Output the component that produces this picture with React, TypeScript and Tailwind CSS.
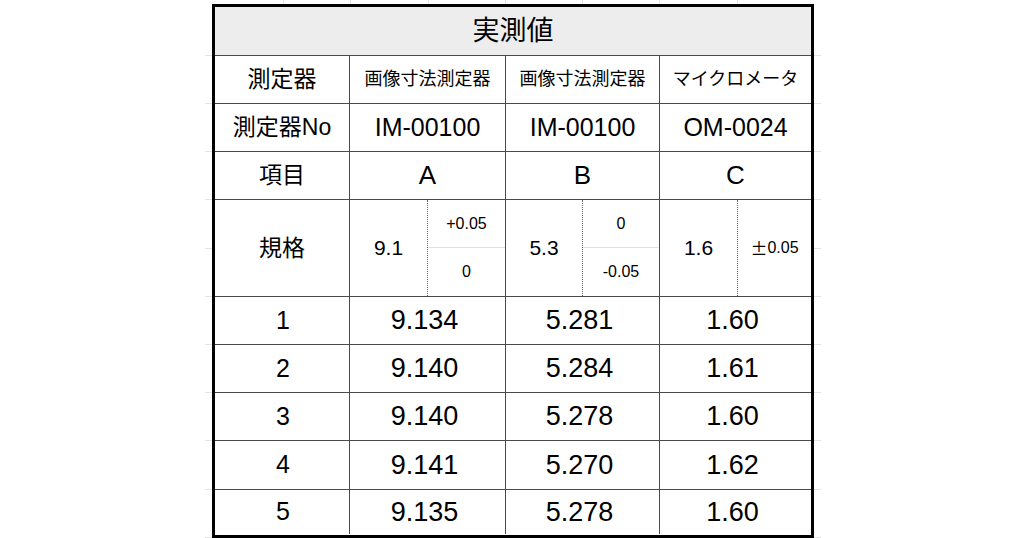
import React from "react";

const FONT = {
  fontFamily: '"Liberation Sans", Arial, "Noto Sans CJK JP", sans-serif',
};

const leftTicks = [
  "mt-[51px]",
  "mt-[47px]",
  "mt-[47px]",
  "mt-[47px]",
  "mt-[48px]",
  "mt-[47px]",
  "mt-[47px]",
  "mt-[47px]",
  "mt-[47px]",
  "mt-[48px]",
  "mt-[47px]",
];

function Ticks() {
  return (
    <div className="flex flex-col w-[7px] shrink-0">
      {leftTicks.map((c, i) => (
        <div key={i} className={`h-px w-full bg-[#e3e3e3] ${c}`} />
      ))}
    </div>
  );
}

const line = "border-[#4a4a4a]";

function Row({
  label,
  cells,
  h,
  labelCls = "text-[23px]",
  cellCls = "text-[25px]",
  last = false,
}: {
  label: string;
  cells: string[];
  h: string;
  labelCls?: string;
  cellCls?: string;
  last?: boolean;
}) {
  return (
    <div
      className={`grid grid-cols-[135px_156px_154px_151px] ${h} ${
        last ? "" : `border-b ${line}`
      }`}
    >
      <div className={`flex items-center justify-center border-r ${line} ${labelCls}`}>
        {label}
      </div>
      <div className={`flex items-center justify-center border-r ${line} ${cellCls}`}>
        {cells[0]}
      </div>
      <div className={`flex items-center justify-center border-r ${line} ${cellCls}`}>
        {cells[1]}
      </div>
      <div className={`flex items-center justify-center ${cellCls}`}>{cells[2]}</div>
    </div>
  );
}

function SpecSplit({
  base,
  upper,
  lower,
  leftW,
}: {
  base: string;
  upper: string;
  lower: string;
  leftW: string;
}) {
  return (
    <div className="flex h-full">
      <div
        className={`${leftW} shrink-0 flex items-center justify-center border-r border-dotted border-r-[#6a6a6a] text-[21px]`}
      >
        {base}
      </div>
      <div className="flex-1 flex flex-col">
        <div className="h-[48px] border-b border-[#e2e2e2] flex items-center justify-center text-[16px]">
          {upper}
        </div>
        <div className="flex-1 flex items-center justify-center text-[16px]">{lower}</div>
      </div>
    </div>
  );
}

const dataCls = "text-[27px] pr-[6px]";

export default function App() {
  return (
    <div className="w-[1024px] h-[538px] bg-white overflow-hidden text-black" style={FONT}>
      <div className="flex flex-col pl-[205px]">
        {/* top spreadsheet gridline stubs */}
        <div className="flex h-[4px] pl-[7px]">
          <div className="w-px h-full bg-[#e3e3e3] ml-[71px]" />
          <div className="w-px h-full bg-[#e3e3e3] ml-[66px]" />
          <div className="w-px h-full bg-[#e3e3e3] ml-[77px]" />
          <div className="w-px h-full bg-[#e3e3e3] ml-[76px]" />
          <div className="w-px h-full bg-[#e3e3e3] ml-[76px]" />
          <div className="w-px h-full bg-[#e3e3e3] ml-[76px]" />
          <div className="w-px h-full bg-[#e3e3e3] ml-[77px]" />
        </div>
        <div className="flex">
          <Ticks />
          <div className="w-[602px] shrink-0 border-[3px] border-black flex flex-col">
            <div
              className={`h-[49px] bg-[#ededed] border-b ${line} flex items-center justify-center text-[27px]`}
            >
              実測値
            </div>
            <Row
              h="h-[48px]"
              label="測定器"
              cells={["画像寸法測定器", "画像寸法測定器", "マイクロメータ"]}
              cellCls="text-[18px]"
            />
            <Row h="h-[48px]" label="測定器No" cells={["IM-00100", "IM-00100", "OM-0024"]} />
            <Row h="h-[48px]" label="項目" cells={["A", "B", "C"]} cellCls="text-[26px]" />
            <div className={`grid grid-cols-[135px_156px_154px_151px] h-[97px] border-b ${line}`}>
              <div className={`flex items-center justify-center border-r ${line} text-[23px]`}>
                規格
              </div>
              <div className={`border-r ${line}`}>
                <SpecSplit base="9.1" upper="+0.05" lower="0" leftW="w-[78px]" />
              </div>
              <div className={`border-r ${line}`}>
                <SpecSplit base="5.3" upper="0" lower="-0.05" leftW="w-[77px]" />
              </div>
              <div className="flex h-full">
                <div className="w-[78px] shrink-0 flex items-center justify-center border-r border-dotted border-r-[#6a6a6a] text-[21px]">
                  1.6
                </div>
                <div className="flex-1 flex items-center justify-center text-[16px]">
                  <span className="font-['Noto_Sans_CJK_JP'] text-[17px]">±</span>
                  <span>0.05</span>
                </div>
              </div>
            </div>
            <Row h="h-[48px]" label="1" cells={["9.134", "5.281", "1.60"]} labelCls="text-[25px] pl-[2px]" cellCls={dataCls} />
            <Row h="h-[48px]" label="2" cells={["9.140", "5.284", "1.61"]} labelCls="text-[25px] pl-[2px]" cellCls={dataCls} />
            <Row h="h-[48px]" label="3" cells={["9.140", "5.278", "1.60"]} labelCls="text-[25px] pl-[2px]" cellCls={dataCls} />
            <Row h="h-[49px]" label="4" cells={["9.141", "5.270", "1.62"]} labelCls="text-[25px] pl-[2px]" cellCls={dataCls} />
            <Row h="h-[44px]" label="5" cells={["9.135", "5.278", "1.60"]} labelCls="text-[25px] pl-[2px]" cellCls={dataCls} last />
          </div>
          <Ticks />
        </div>
      </div>
    </div>
  );
}
